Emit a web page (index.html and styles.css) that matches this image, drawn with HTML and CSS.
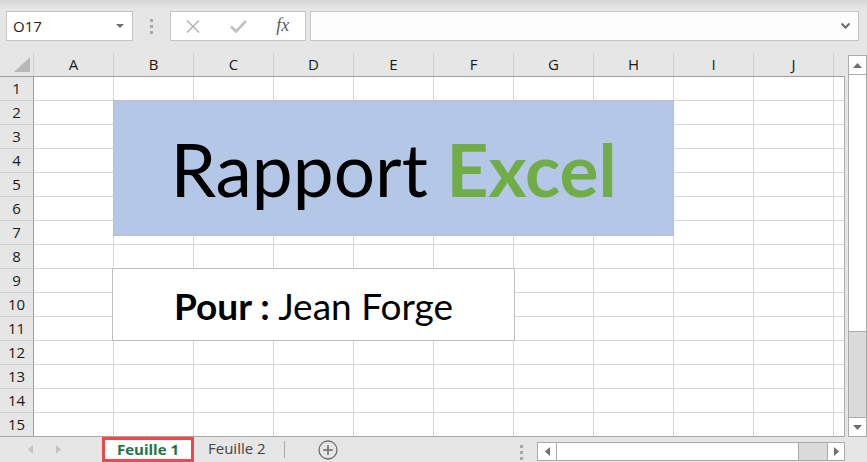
FILE: index.html
```html
<!DOCTYPE html>
<html lang="fr">
<head>
<meta charset="utf-8">
<title>Rapport Excel</title>
<link rel="stylesheet" href="styles.css">
</head>
<body>
<div class="app">
  <div class="toolbar">
    <div class="namebox">
      <span class="nb-text">O17</span>
      <svg class="nb-caret" width="8" height="4" viewBox="0 0 8 4"><path d="M0 0H8L4 4Z" fill="#6f6f6f"/></svg>
    </div>
    <div class="grip"><i></i><i></i><i></i></div>
    <div class="fxbox">
      <span class="fxslot"><svg width="14" height="13" viewBox="0 0 14 13"><path d="M1 0.5L13 12.5M13 0.5L1 12.5" stroke="#b5b5b5" stroke-width="1.6" fill="none"/></svg></span>
      <span class="fxslot"><svg width="17" height="13" viewBox="0 0 17 13"><path d="M1 6.5L6 11.5L16 1" stroke="#c2c2c2" stroke-width="2.6" fill="none"/></svg></span>
      <span class="fxslot fx">fx</span>
    </div>
    <div class="formula">
      <svg class="chev" width="9" height="6" viewBox="0 0 9 6"><path d="M0.5 0.5L4.5 4.5L8.5 0.5" stroke="#6b6b6b" stroke-width="2" fill="none"/></svg>
    </div>
  </div>

  <div class="main">
    <div class="sheet">
      <div class="colheads">
        <div class="corner"><svg width="34" height="23" viewBox="0 0 34 23"><path d="M14 19H30V4Z" fill="#b9b9b9"/></svg></div>
        <div class="ch">A</div><div class="ch">B</div><div class="ch">C</div><div class="ch">D</div><div class="ch">E</div>
        <div class="ch">F</div><div class="ch">G</div><div class="ch">H</div><div class="ch">I</div><div class="ch">J</div>
        <div class="ch-rest"></div>
      </div>
      <div class="body">
        <div class="rowheads">
          <div class="rh">1</div><div class="rh">2</div><div class="rh">3</div><div class="rh">4</div><div class="rh">5</div>
          <div class="rh">6</div><div class="rh">7</div><div class="rh">8</div><div class="rh">9</div><div class="rh">10</div>
          <div class="rh">11</div><div class="rh">12</div><div class="rh">13</div><div class="rh">14</div><div class="rh">15</div>
        </div>
        <div class="cells">
          <div class="shape title-shape"><span class="t-reg">Rapport</span>&nbsp;<span class="t-bold">Excel</span></div>
          <div class="shape pour-shape"><b>Pour :</b>&nbsp;Jean Forge</div>
        </div>
      </div>
    </div>
    <div class="vscroll">
      <div class="vbtn"><svg width="9" height="5" viewBox="0 0 9 5"><path d="M0 5H9L4.5 0Z" fill="#6f6f6f"/></svg></div>
      <div class="vthumb"></div>
      <div class="vtrack"></div>
      <div class="vbtn"><svg width="9" height="5" viewBox="0 0 9 5"><path d="M0 0H9L4.5 5Z" fill="#6f6f6f"/></svg></div>
    </div>
  </div>

  <div class="tabbar">
    <div class="tabnav">
      <svg width="5" height="9" viewBox="0 0 5 9"><path d="M5 0V9L0 4.5Z" fill="#c3c3c3"/></svg>
      <svg width="5" height="9" viewBox="0 0 5 9"><path d="M0 0V9L5 4.5Z" fill="#c3c3c3"/></svg>
    </div>
    <div class="tab active">Feuille 1</div>
    <div class="tab">Feuille 2</div>
    <div class="tabsep"></div>
    <div class="addsheet"><svg width="20" height="20" viewBox="0 0 20 20"><circle cx="10" cy="10" r="9" stroke="#6f6f6f" stroke-width="1.3" fill="none"/><path d="M10 5V15M5 10H15" stroke="#6f6f6f" stroke-width="1.6"/></svg></div>
    <div class="grip2"><i></i><i></i><i></i></div>
    <div class="hscroll">
      <div class="hbtn hbtn-l"><svg width="5" height="9" viewBox="0 0 5 9"><path d="M5 0V9L0 4.5Z" fill="#6f6f6f"/></svg></div>
      <div class="hthumb"></div>
      <div class="htrack"></div>
      <div class="hbtn hbtn-r"><svg width="5" height="9" viewBox="0 0 5 9"><path d="M0 0V9L5 4.5Z" fill="#6f6f6f"/></svg></div>
    </div>
  </div>
</div>
</body>
</html>
```

FILE: styles.css
```css
html, body {
  margin: 0;
  padding: 0;
}
body {
  width: 867px;
  height: 462px;
  overflow: hidden;
  background: #e6e6e6;
  font-family: "Open Sans", "Noto Sans", sans-serif;
  color: #222;
}
.app {
  width: 867px;
  height: 462px;
  display: flex;
  flex-direction: column;
}

/* toolbar */
.toolbar {
  height: 53px;
  box-sizing: border-box;
  padding: 11px 0 0 6px;
  display: flex;
  align-items: flex-start;
  background: linear-gradient(#d5d5d5, #e6e6e6 9px);
}
.namebox {
  width: 127px;
  height: 30px;
  box-sizing: border-box;
  border: 1px solid #c6c6c6;
  background: #fff;
  display: flex;
  align-items: center;
  padding-left: 6px;
}
.nb-text {
  font-size: 15px;
  color: #222;
}
.nb-caret {
  margin-left: auto;
  margin-right: 8px;
}
.grip {
  margin-left: 17px;
  padding-top: 8px;
  display: flex;
  flex-direction: column;
  gap: 3px;
}
.grip i, .grip2 i {
  display: block;
  width: 3px;
  height: 3px;
  background: #a9a9a9;
}
.fxbox {
  margin-left: 17px;
  width: 136px;
  height: 30px;
  box-sizing: border-box;
  border: 1px solid #c6c6c6;
  background: #fff;
  display: flex;
  align-items: center;
}
.fxslot {
  width: 45px;
  display: flex;
  justify-content: center;
  align-items: center;
}
.fx {
  font-family: "Liberation Serif", "DejaVu Serif", serif;
  font-style: italic;
  font-size: 18px;
  color: #5c5c5c;
  padding-bottom: 2px;
}
.formula {
  margin-left: 4px;
  width: 549px;
  height: 30px;
  box-sizing: border-box;
  border: 1px solid #c6c6c6;
  background: #fdfdfd;
  display: flex;
  align-items: center;
  justify-content: flex-end;
  padding-right: 8px;
}

/* sheet */
.main {
  height: 384px;
  display: flex;
}
.sheet {
  width: 845px;
  height: 384px;
  display: flex;
  flex-direction: column;
}
.colheads {
  height: 24px;
  box-sizing: border-box;
  border-bottom: 1px solid #9f9f9f;
  display: flex;
}
.corner {
  width: 34px;
  box-sizing: border-box;
  border-right: 1px solid #cfcfcf;
}
.corner svg {
  display: block;
}
.ch {
  width: 80px;
  box-sizing: border-box;
  border-right: 1px solid #cfcfcf;
  text-align: center;
  font-size: 15px;
  line-height: 23px;
  color: #1a1a1a;
}
.ch-rest {
  flex: 1;
}
.body {
  flex: 1;
  display: flex;
  box-sizing: border-box;
  border-right: 1px solid #ababab;
  border-bottom: 1px solid #a6a6a6;
  overflow: hidden;
}
.rowheads {
  width: 34px;
  box-sizing: border-box;
  border-right: 1px solid #9f9f9f;
}
.rh {
  height: 24px;
  box-sizing: border-box;
  border-bottom: 1px solid #cfcfcf;
  text-align: center;
  font-size: 15px;
  line-height: 23px;
  color: #1a1a1a;
}
.cells {
  flex: 1;
  position: relative;
  background-color: #fff;
  background-image:
    repeating-linear-gradient(to right, transparent 0 79px, #d9d9d9 79px 80px),
    repeating-linear-gradient(to bottom, transparent 0 23px, #d9d9d9 23px 24px);
}
.shape {
  position: absolute;
  box-sizing: border-box;
  border: 1px solid #bfbfbf;
  display: flex;
  align-items: center;
  justify-content: center;
  font-family: Lato, "Open Sans", sans-serif;
  color: #000;
  white-space: nowrap;
}
.title-shape {
  left: 79px;
  top: 23px;
  width: 561px;
  height: 136px;
  background: #b4c7e7;
  font-size: 73px;
  padding-top: 2px;
}
.t-bold {
  font-weight: 700;
  color: #70ad47;
}
.pour-shape {
  left: 78px;
  top: 191px;
  width: 403px;
  height: 73px;
  background: #fff;
  font-size: 37px;
  padding-top: 1px;
}

/* vertical scrollbar */
.vscroll {
  margin-left: 3px;
  margin-top: 2px;
  width: 19px;
  height: 382px;
  box-sizing: border-box;
  border: 1px solid #ababab;
  background: #dadada;
  display: flex;
  flex-direction: column;
}
.vbtn {
  height: 18px;
  background: #fff;
  display: flex;
  align-items: center;
  justify-content: center;
}
.vbtn:first-child {
  border-bottom: 1px solid #ababab;
}
.vbtn:last-child {
  border-top: 1px solid #ababab;
}
.vthumb {
  height: 256px;
  background: #fff;
  border-bottom: 1px solid #ababab;
}
.vtrack {
  flex: 1;
}

/* tab bar */
.tabbar {
  flex: 1;
  display: flex;
  align-items: flex-start;
}
.tabnav {
  width: 102px;
  height: 25px;
  display: flex;
  align-items: center;
  padding-left: 28px;
  box-sizing: border-box;
  gap: 23px;
}
.tab {
  height: 25px;
  box-sizing: border-box;
  font-size: 15px;
  line-height: 23px;
  color: #444;
  padding-left: 14px;
  width: 90px;
}
.tab.active {
  width: 92px;
  padding-left: 0;
  text-align: center;
  border: 3px solid #f0484a;
  background: #fff;
  color: #217346;
  font-weight: 700;
  line-height: 18px;
}
.tabsep {
  width: 1px;
  height: 17px;
  margin-top: 4px;
  background: #a6a6a6;
}
.addsheet {
  margin-left: 33px;
  margin-top: 3px;
  height: 20px;
}
.addsheet svg {
  display: block;
}
.grip2 {
  margin-left: 182px;
  padding-top: 8px;
  display: flex;
  flex-direction: column;
  gap: 3px;
}
.hscroll {
  margin-left: 14px;
  margin-top: 5px;
  width: 308px;
  height: 19px;
  box-sizing: border-box;
  border: 1px solid #ababab;
  background: #dadada;
  display: flex;
}
.hbtn {
  width: 18px;
  background: #fff;
  display: flex;
  align-items: center;
  justify-content: center;
}
.hbtn-l {
  border-right: 1px solid #ababab;
}
.hbtn-r {
  width: 16px;
  border-left: 1px solid #ababab;
}
.hthumb {
  width: 241px;
  background: #fff;
  border-right: 1px solid #ababab;
}
.htrack {
  flex: 1;
}
```
